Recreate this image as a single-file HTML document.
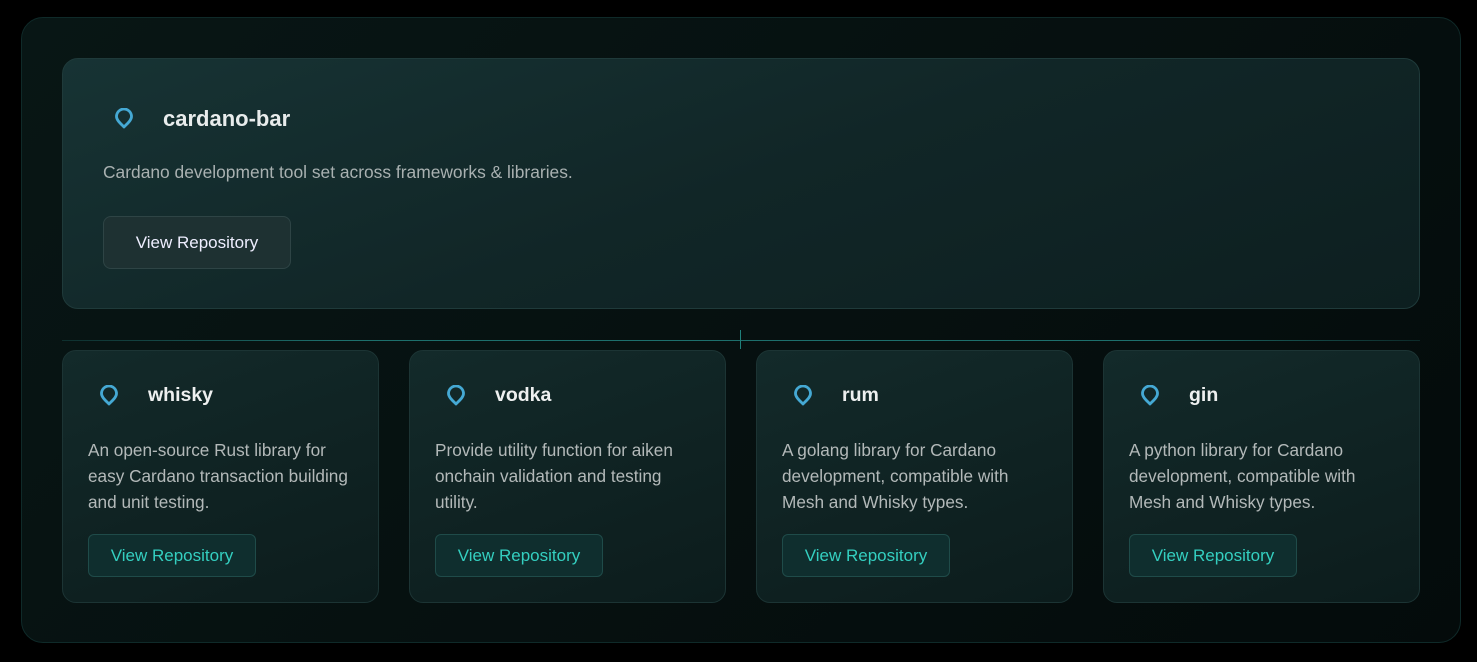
<!DOCTYPE html>
<html><head><style>
*{margin:0;padding:0;box-sizing:border-box}
body{width:1477px;height:662px;background:#000;font-family:"Liberation Sans",sans-serif;position:relative;overflow:hidden}
.outer{position:absolute;left:21px;top:17px;width:1440px;height:626px;border-radius:22px;background:linear-gradient(135deg,#081615,#040b0b);border:1px solid #0f2a29}
.top{position:absolute;left:62px;top:58px;width:1358px;height:251px;border-radius:16px;background:linear-gradient(160deg,#173334 0%,#112627 50%,#0d1f20 100%);border:1px solid #1f3a3a}
.pin{position:absolute}
.t1{position:absolute;left:100px;top:47px;font-size:22px;font-weight:bold;color:#e8ecec}
.d1{position:absolute;left:40px;top:103px;font-size:17.4px;color:#a9b1b1}
.b1{position:absolute;left:40px;top:157px;width:188px;height:53px;border-radius:8px;background:#1e3132;border:1px solid #2e4445;color:#eef;font-size:17px;text-align:center;line-height:51px}
.hl{position:absolute;left:62px;top:340px;width:1358px;height:1px;background:linear-gradient(90deg,rgba(30,110,108,.3),#1d6f6c 20%,#1d6f6c 80%,rgba(30,110,108,.3))}
.vl{position:absolute;left:740px;top:330px;width:1px;height:19px;background:#1f807b}
.c{position:absolute;top:350px;width:317px;height:253px;border-radius:14px;background:linear-gradient(160deg,#132a2a,#0c1c1c);border:1px solid #1c3434}
.c .t{position:absolute;left:85px;top:33px;font-size:19.5px;font-weight:bold;color:#eef0f0}
.c .d{position:absolute;left:25px;top:86px;width:268px;font-size:17.2px;line-height:26px;color:#b3b9b9}
.c .b{position:absolute;left:25px;top:183px;width:168px;height:43px;border-radius:6px;background:#0f2e2e;border:1px solid #1f4b49;color:#34cfc0;font-size:17px;text-align:center;line-height:41px}
</style></head><body>
<div class="outer"></div>
<div class="top">
<svg class="pin" style="left:50px;top:49px" width="22" height="22" viewBox="0 0 22 22"><path d="M11 19 C7 15 3.5 12 3.5 8.5 A7.5 7.5 0 0 1 18.5 8.5 C18.5 12 15 15 11 19Z" fill="none" stroke="#45a9d4" stroke-width="2.8" stroke-linejoin="round"/></svg>
<div class="t1">cardano-bar</div>
<div class="d1">Cardano development tool set across frameworks &amp; libraries.</div>
<div class="b1">View Repository</div>
</div>
<div class="hl"></div><div class="vl"></div>
<div class="c" style="left:62px"><svg class="pin" style="left:35px;top:34px" width="22" height="22" viewBox="0 0 22 22"><path d="M11 19 C7 15 3.5 12 3.5 8.5 A7.5 7.5 0 0 1 18.5 8.5 C18.5 12 15 15 11 19Z" fill="none" stroke="#45a9d4" stroke-width="2.8" stroke-linejoin="round"/></svg><div class="t">whisky</div><div class="d">An open-source Rust library for easy Cardano transaction building and unit testing.</div><div class="b">View Repository</div></div>
<div class="c" style="left:409px"><svg class="pin" style="left:35px;top:34px" width="22" height="22" viewBox="0 0 22 22"><path d="M11 19 C7 15 3.5 12 3.5 8.5 A7.5 7.5 0 0 1 18.5 8.5 C18.5 12 15 15 11 19Z" fill="none" stroke="#45a9d4" stroke-width="2.8" stroke-linejoin="round"/></svg><div class="t">vodka</div><div class="d">Provide utility function for aiken onchain validation and testing utility.</div><div class="b">View Repository</div></div>
<div class="c" style="left:756px"><svg class="pin" style="left:35px;top:34px" width="22" height="22" viewBox="0 0 22 22"><path d="M11 19 C7 15 3.5 12 3.5 8.5 A7.5 7.5 0 0 1 18.5 8.5 C18.5 12 15 15 11 19Z" fill="none" stroke="#45a9d4" stroke-width="2.8" stroke-linejoin="round"/></svg><div class="t">rum</div><div class="d">A golang library for Cardano development, compatible with Mesh and Whisky types.</div><div class="b">View Repository</div></div>
<div class="c" style="left:1103px"><svg class="pin" style="left:35px;top:34px" width="22" height="22" viewBox="0 0 22 22"><path d="M11 19 C7 15 3.5 12 3.5 8.5 A7.5 7.5 0 0 1 18.5 8.5 C18.5 12 15 15 11 19Z" fill="none" stroke="#45a9d4" stroke-width="2.8" stroke-linejoin="round"/></svg><div class="t">gin</div><div class="d">A python library for Cardano development, compatible with Mesh and Whisky types.</div><div class="b">View Repository</div></div>
</body></html>
